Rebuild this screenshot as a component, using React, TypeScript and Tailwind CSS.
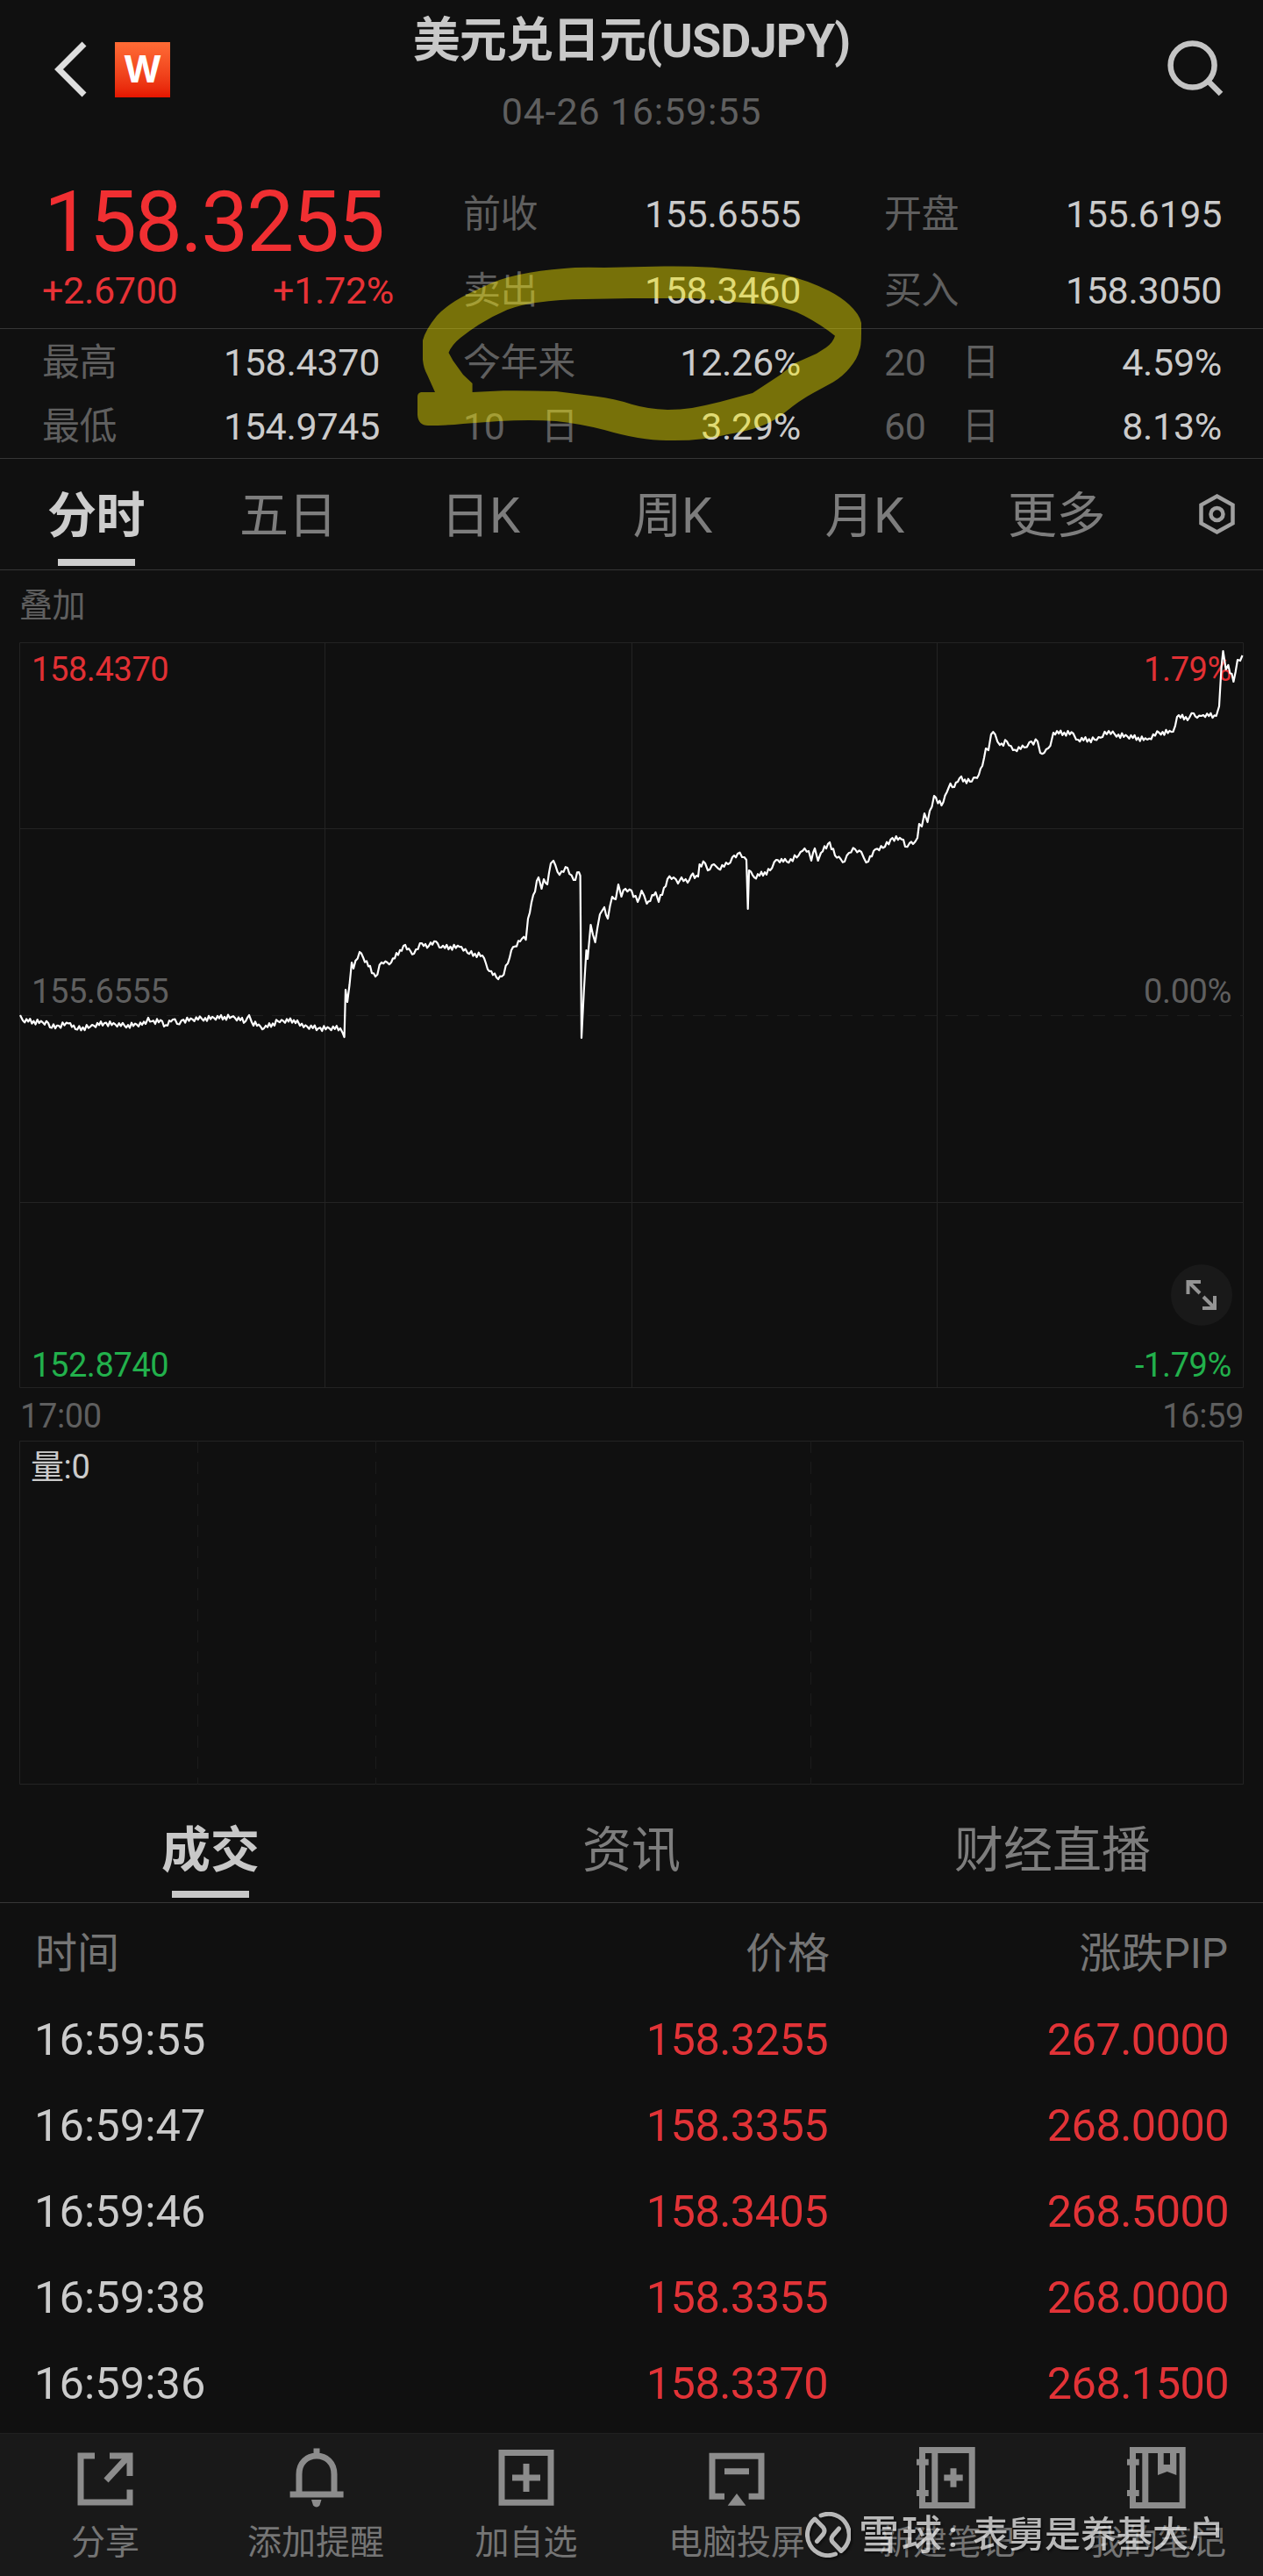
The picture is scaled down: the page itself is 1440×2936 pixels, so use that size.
import type { ReactNode } from 'react';
import clsx from 'clsx';

type Quote = { label: string; value: string };

const topQuotes: Quote[][] = [
  [
    { label: '前收', value: '155.6555' },
    { label: '卖出', value: '158.3460' },
  ],
  [
    { label: '开盘', value: '155.6195' },
    { label: '买入', value: '158.3050' },
  ],
];

const rangeQuotes: Quote[] = [
  { label: '最高', value: '158.4370' },
  { label: '今年来', value: '12.26%' },
  { label: '20 日', value: '4.59%' },
  { label: '最低', value: '154.9745' },
  { label: '10 日', value: '3.29%' },
  { label: '60 日', value: '8.13%' },
];

const periods = ['分时', '五日', '日K', '周K', '月K', '更多'];
const sections = ['成交', '资讯', '财经直播'];

const trades = [
  { time: '16:59:55', price: '158.3255', pip: '267.0000' },
  { time: '16:59:47', price: '158.3355', pip: '268.0000' },
  { time: '16:59:46', price: '158.3405', pip: '268.5000' },
  { time: '16:59:38', price: '158.3355', pip: '268.0000' },
  { time: '16:59:36', price: '158.3370', pip: '268.1500' },
];

// Turning points of the intraday line, x and y in page pixels.
const turns: [number, number][] = [
  [23, 1157], [26, 1163], [55, 1166], [57, 1171], [67, 1169], [80, 1166], [86, 1173], [103, 1170], [119, 1166], [142, 1169],
  [166, 1167], [169, 1160], [173, 1164], [185, 1164], [187, 1170], [197, 1162], [202, 1167], [207, 1163], [230, 1161], [264, 1159],
  [280, 1164], [284, 1157], [287, 1165], [301, 1172], [317, 1164], [339, 1163], [342, 1169], [363, 1172], [388, 1172], [392.6, 1182],
  [394, 1128], [396, 1142], [401, 1097], [403, 1104], [410, 1085], [428, 1113], [435, 1097], [446, 1097], [460, 1078], [472, 1087],
  [481, 1075], [489, 1078], [497, 1073], [503, 1080], [526, 1079], [533, 1086], [550, 1089], [558, 1107], [566, 1114], [572, 1113],
  [579, 1098], [583, 1083], [595, 1070], [599.6, 1071], [602, 1047], [608, 1020], [614, 1000], [617.5, 1013], [620, 1002], [624, 1008],
  [628, 984], [631, 981], [638, 997], [647, 989], [654, 1003], [660, 994], [661.6, 998], [663, 1183], [665.7, 1130], [668.5, 1083],
  [670, 1093], [673.5, 1054], [678.6, 1074], [684, 1042], [689, 1034], [693, 1047], [698, 1022], [702, 1025], [705, 1008], [708.5, 1022],
  [713, 1013], [720, 1015], [727, 1028], [731.5, 1015], [737.4, 1030], [747.5, 1017], [751, 1028], [761, 1002], [768, 1000], [773, 1007],
  [777, 1000], [784, 1006], [788, 998], [796, 999], [797.6, 985], [804, 984], [807, 992], [814, 985], [819, 990], [830, 985],
  [835, 977], [841, 973], [848.6, 977], [851, 980], [852.7, 1036], [854, 992], [860, 1000], [878, 992], [885, 980], [897, 982],
  [910.5, 975], [917.4, 967], [922, 970], [925, 981], [929, 967], [932.6, 981], [936, 972], [946, 960], [952, 975], [963, 982],
  [968, 972], [975, 968], [982, 971], [985, 978], [990, 982], [998, 968], [1009, 965], [1017.5, 955], [1030, 957], [1032, 965],
  [1037, 961], [1041, 962], [1046, 955], [1048, 939], [1051, 942], [1054, 927], [1057.5, 937], [1065, 907], [1073.5, 918], [1079.5, 903],
  [1083.6, 893], [1088, 897], [1094, 887], [1106, 891], [1116, 883], [1120, 873], [1124, 853], [1127, 855], [1130, 837], [1134.6, 837],
  [1140, 849], [1148, 845], [1155, 855], [1168, 852], [1173.6, 846], [1183, 845], [1186, 858], [1190.6, 858], [1197.5, 850], [1201, 835],
  [1223.7, 836], [1227, 843], [1248, 843], [1257, 840], [1259.5, 834], [1271, 837], [1308, 843], [1321.5, 835], [1337.5, 834], [1342, 817],
  [1356, 818], [1361, 813], [1365, 818], [1372, 815], [1386.7, 816], [1390, 805], [1392.6, 760], [1394.5, 742], [1397.7, 763], [1400.4, 758],
  [1406.4, 777], [1411, 752], [1414, 753], [1416.5, 747],
];

const ticks = [0, 2.2, -2, 0.8, -2.8, 2.4, -0.6, 3, -2.6, 1.2, -1.4];

function intradayPoints() {
  const out: string[] = [];
  let n = 0;
  turns.forEach(([x, y], i) => {
    if (i > 0) {
      const [px, py] = turns[i - 1];
      const steps = Math.floor((x - px) / 2);
      for (let s = 1; s < steps; s += 1) {
        const t = s / steps;
        n += 1;
        out.push(`${(px + (x - px) * t).toFixed(1)},${(py + (y - py) * t + ticks[n % ticks.length]).toFixed(1)}`);
      }
    }
    out.push(`${x},${y}`);
  });
  return out.join(' ');
}

function Icon({ children }: { children: ReactNode }) {
  return (
    <svg className="h-[72px] w-[72px] overflow-visible" viewBox="0 0 72 72" fill="none" stroke="#8c8c8c" strokeWidth="7" aria-hidden="true">
      {children}
    </svg>
  );
}

const notebook = (
  <>
    <path d="M7.5 1.5H64.2V64.5H7.5ZM21.8 1.5V64.5" />
    <path d="M1 15.3H14.7M1 50.5H14.7" />
  </>
);

const actions = [
  {
    label: '分享',
    icon: <path d="M24 8H8V61H64V46.5M41 8H64V31M62 9L37 36" />,
  },
  {
    label: '添加提醒',
    icon: (
      <>
        <path d="M17 50V29C17 16 26 8 37 8S57 16 57 29V50M6.6 52H67.6M37 -.5V8" />
        <path d="M31 58H42.5L40.5 64.5Q37 68.5 33 64.5Z" fill="#8c8c8c" stroke="none" />
      </>
    ),
  },
  {
    label: '加自选',
    icon: <path d="M8 4.5H64V61.2H8ZM20 33H52M36 17V49" />,
  },
  {
    label: '电脑投屏',
    icon: (
      <>
        <path d="M22 54.2H8V8.2H64V54.2H49.6M22 25.7H50" />
        <path d="M36 51L46.4 64.7H25.7Z" fill="#8c8c8c" stroke="none" />
      </>
    ),
  },
  {
    label: '新建笔记',
    icon: (
      <>
        {notebook}
        <path d="M32.3 33H53.7M43 22.3V43.7" />
      </>
    ),
  },
  {
    label: '我的笔记',
    icon: (
      <>
        {notebook}
        <path d="M36 2V30L46.7 26L57.3 30V2H50V18H42.7V2Z" fill="#8c8c8c" stroke="none" />
      </>
    ),
  },
];

function QuoteCell({ label, value, className }: Quote & { className: string }) {
  return (
    <div className={clsx('flex items-center justify-between pr-[47px] pl-12', className)}>
      <span className="flex min-w-[131px] justify-between tracking-[-0.4px] text-[#5f5f5f]">
        {label.split(' ').map((part) => (
          <span key={part}>{part}</span>
        ))}
      </span>
      <span className="tracking-[-0.3px] text-[#cbcbcb]">{value}</span>
    </div>
  );
}

function Header() {
  return (
    <header className="flex h-[200px] justify-between">
      <div className="flex h-[158px] w-[400px] items-center pl-[60px]">
        <svg className="h-[64px] w-[40px]" viewBox="0 0 40 64" fill="none" stroke="#dedede" strokeWidth="7" aria-hidden="true">
          <path d="M36 3L7 32L36 61" />
        </svg>
        <div className="ml-[31px] flex h-[63px] w-[63px] items-center justify-center bg-gradient-to-b from-[#ff6b35] to-[#e51400] font-['Inter'] text-[42px] leading-none font-bold text-white">
          W
        </div>
      </div>
      <div className="pt-[15px] text-center">
        <h1 className="text-[54px] leading-[64px] font-bold tracking-[-0.9px] whitespace-nowrap text-[#c8c8c8]">美元兑日元(USDJPY)</h1>
        <p className="mt-[16px] text-[43px] leading-[64px] tracking-[0.8px] text-[#5f5f5f]">04-26 16:59:55</p>
      </div>
      <div className="flex h-[154px] w-[400px] items-center justify-end pr-[44px]">
        <svg className="h-[68px] w-[68px]" viewBox="0 0 68 68" fill="none" stroke="#c4c4c4" strokeWidth="6.5" aria-hidden="true">
          <circle cx="31.6" cy="31.5" r="25" />
          <path d="M50 50L64 64" />
        </svg>
      </div>
    </header>
  );
}

function Quotes() {
  return (
    <section className="relative text-[43px] leading-[50px]">
      <div className="grid h-[175px] grid-cols-3 border-b border-[#363636]">
        <div className="pt-[4px] text-[#e83236]">
          <p className="pl-[50px] text-[96px] leading-[98px] tracking-[-2px] text-[#f02f32]">158.3255</p>
          <p className="mt-[4px] flex justify-between pr-[31px] pl-[48px] tracking-[-0.3px]">
            <span>+2.6700</span>
            <span>+1.72%</span>
          </p>
        </div>
        {topQuotes.map((column) => (
          <div key={column[0].label}>
            {column.map((quote) => (
              <QuoteCell key={quote.label} {...quote} className="h-[87px]" />
            ))}
          </div>
        ))}
      </div>
      <div className="grid h-[148px] grid-cols-3 border-b border-[#363636] pt-px">
        {rangeQuotes.map((quote) => (
          <QuoteCell key={quote.label} {...quote} className="h-[73px]" />
        ))}
      </div>

      {/* highlighter stroke round the year-to-date figure */}
      <svg className="pointer-events-none absolute top-[100px] left-[470px] h-[210px] w-[520px]" viewBox="470 300 520 210" aria-hidden="true">
        <path
          fill="#fff000"
          fillOpacity="0.43"
          fillRule="evenodd"
          d="M480 447Q476 448 476 452V473Q477 485 488 485Q510 485 528 483L569 480Q605 478 634 480Q662 483 689 490Q730 502 760 502Q800 503 830 495Q850 492 867 486Q883 480 895 470Q912 456 927 448L950 435.5Q962 428 969 419Q978 408 979.5 400Q982 395 982 380V368Q980 358 968 347Q958 338 945 331.5Q920 319 894 313L849 308L812 304.7Q780 303 757 303.5L689 305Q660 304 643 306Q615 308 592 313Q568 318 551 327Q532 335 519 343Q505 352 498 360Q485 376 482 388V410Q483 420 487 427L496 447ZM538.6 447V437L528 427L516.5 411L511.5 402Q515 393 525 385Q535 377 546 370Q562 360 578.5 353Q595 347 611 345Q640 341 666 341L720 340L793 340L835 344L876 347Q900 351 917 360Q936 370 952 382.7Q950 390 942 396L931 403L904 415Q898 421 890 427L858 448L821 458Q805 462 789 465Q775 467 761 467Q738 466 720 460.7Q700 454 679.5 451.7L634 446Q600 445 574 445.3L538.6 447Z"
        />
      </svg>
    </section>
  );
}

function PeriodTabs() {
  return (
    <nav className="flex h-[127px] border-b border-[#363636] text-[56px] leading-[64px] text-[#7d7d7d]">
      {periods.map((period, index) => (
        <div key={period} className={clsx('flex w-[219px] flex-col items-center pt-[33px]', index === 0 && 'font-bold text-[#cdcdcd]')}>
          <span className="tracking-[-0.5px]">{period}</span>
          {index === 0 && <span className="mt-[17px] h-[8px] w-[88px] bg-[#cdcdcd]" />}
        </div>
      ))}
      <svg className="mt-[39px] ml-[50px] h-[48px] w-[46px]" viewBox="0 0 46 48" fill="none" stroke="#a0a0a0" strokeWidth="4.5" aria-hidden="true">
        <path d="M23.5 3.5L41.5 13.5V34.5L23.5 44.5L5.5 34.5V13.5Z" />
        <circle cx="23.5" cy="24" r="7" />
      </svg>
    </nav>
  );
}

function Charts() {
  return (
    <section className="px-[22px] text-[38px] leading-[44px] tracking-[-0.4px] text-[#5f5f5f]">
      <p className="h-[82px] pt-[18px]">叠加</p>
      <div className="relative h-[850px]">
        <div className="absolute inset-x-[14px] top-[9px] flex justify-between text-[#e23034]">
          <span>158.4370</span>
          <span>1.79%</span>
        </div>
        <div className="absolute inset-x-[14px] top-[376px] flex justify-between">
          <span>155.6555</span>
          <span>0.00%</span>
        </div>
        <div className="absolute inset-x-[14px] bottom-[4px] flex justify-between text-[#22b14c]">
          <span>152.8740</span>
          <span>-1.79%</span>
        </div>
        <svg className="absolute inset-0 h-[850px] w-[1396px]" viewBox="22 732 1396 850" fill="none" aria-hidden="true">
          <path d="M22.5 732.5H1417.5V1581.5H22.5ZM370.5 732V1582M720.5 732V1582M1068.5 732V1582M22 944.5H1418M22 1370.5H1418" stroke="#232323" />
          <path d="M22 1157.5H1418" stroke="#1e1e1e" strokeDasharray="14 10" />
          <polyline points={intradayPoints()} stroke="#ffffff" strokeWidth="2.2" strokeLinejoin="round" />
        </svg>
        <div className="absolute top-[709px] right-[13px] flex h-[70px] w-[70px] items-center justify-center rounded-full bg-[#191919]">
          <svg className="h-[36px] w-[36px]" viewBox="0 0 36 36" fill="none" stroke="#949494" strokeWidth="4" aria-hidden="true">
            <path d="M2.5 17V3H17M3 3L16 16M19 33H33V19M33 33L20 20" />
          </svg>
        </div>
      </div>
      <div className="flex h-[60px] items-center justify-between pt-[3px] pl-px">
        <span>17:00</span>
        <span>16:59</span>
      </div>
      <div className="relative h-[392px]">
        <svg className="absolute inset-0 h-[392px] w-[1396px]" viewBox="22 1642 1396 392" fill="none" stroke="#232323" aria-hidden="true">
          <path d="M22.5 1642.5H1417.5V2033.5H22.5Z" />
          <path d="M225.5 1642V2034M428.5 1642V2034M924.5 1642V2034" stroke="#1c1c1c" strokeDasharray="14 10" />
        </svg>
        <p className="relative pt-[8px] pl-[13px] text-[#cbcbcb]">量:0</p>
      </div>
    </section>
  );
}

function Trades() {
  return (
    <section className="h-[739px]">
      <nav className="grid h-[135px] grid-cols-3 border-b border-[#363636] pt-[43px] text-[56px] leading-[64px] text-[#7d7d7d]">
        {sections.map((section, index) => (
          <div key={section} className={clsx('flex flex-col items-center', index === 0 && 'font-bold text-[#c8c8c8]')}>
            {section}
            {index === 0 && <span className="mt-[14px] h-[8px] w-[88px] bg-[#c8c8c8]" />}
          </div>
        ))}
      </nav>
      <div className="grid h-[106px] grid-cols-[480px_466px_454px] items-center pt-[10px] text-[48px] text-[#757575]">
        <span className="pl-[40px]">时间</span>
        <span className="text-right">价格</span>
        <span className="text-right">涨跌PIP</span>
      </div>
      {trades.map((trade) => (
        <div key={trade.time} className="grid h-[98px] grid-cols-[480px_464px_457px] items-center pt-[2px] text-[50.5px] tracking-[-0.6px] text-[#e23337]">
          <span className="pl-[39px] tracking-[0.1px] text-[#cbcbcb]">{trade.time}</span>
          <span className="text-right">{trade.price}</span>
          <span className="text-right">{trade.pip}</span>
        </div>
      ))}
    </section>
  );
}

function ActionBar() {
  return (
    <footer className="relative h-[163px] border-t border-[#202020] bg-[#191919]">
      <div className="grid grid-cols-6 pt-[17px]">
        {actions.map((action) => (
          <div key={action.label} className="flex flex-col items-center text-[39px] leading-[44px] text-[#757575]">
            <Icon>{action.icon}</Icon>
            <span className="mt-[13px] whitespace-nowrap">{action.label}</span>
          </div>
        ))}
      </div>
      <div className="absolute top-[89px] left-[918px] flex h-[52px] items-center whitespace-nowrap text-white/70 drop-shadow-[2px_2px_1px_rgba(0,0,0,0.6)]">
        <svg className="h-[52px] w-[52px]" viewBox="0 0 52 52" fill="none" stroke="currentColor" strokeWidth="5" strokeLinecap="round" strokeLinejoin="round" aria-hidden="true">
          <path d="M18 4A23.5 23.5 0 0 1 41 44.5L31.5 34.5Q28.5 31 31.5 27L38.5 19" />
          <path d="M34.5 48A23.5 23.5 0 0 1 11 8L20.5 17.5Q23.5 21.5 20.5 25.5L13.5 33.5" />
        </svg>
        <span className="ml-[9px] text-[46px] leading-[52px] font-medium tracking-[3px]">雪球</span>
        <span className="ml-[4px] w-[28px] text-[41px] leading-[52px] font-medium">:</span>
        <span className="text-[41px] leading-[52px] font-medium">表舅是养基大户</span>
      </div>
    </footer>
  );
}

export default function App() {
  return (
    <main className="h-[2936px] w-[1440px] overflow-hidden bg-[#101010] font-['Roboto','Noto_Sans_CJK_SC',sans-serif]" lang="zh-CN">
      <Header />
      <Quotes />
      <PeriodTabs />
      <Charts />
      <Trades />
      <ActionBar />
    </main>
  );
}
